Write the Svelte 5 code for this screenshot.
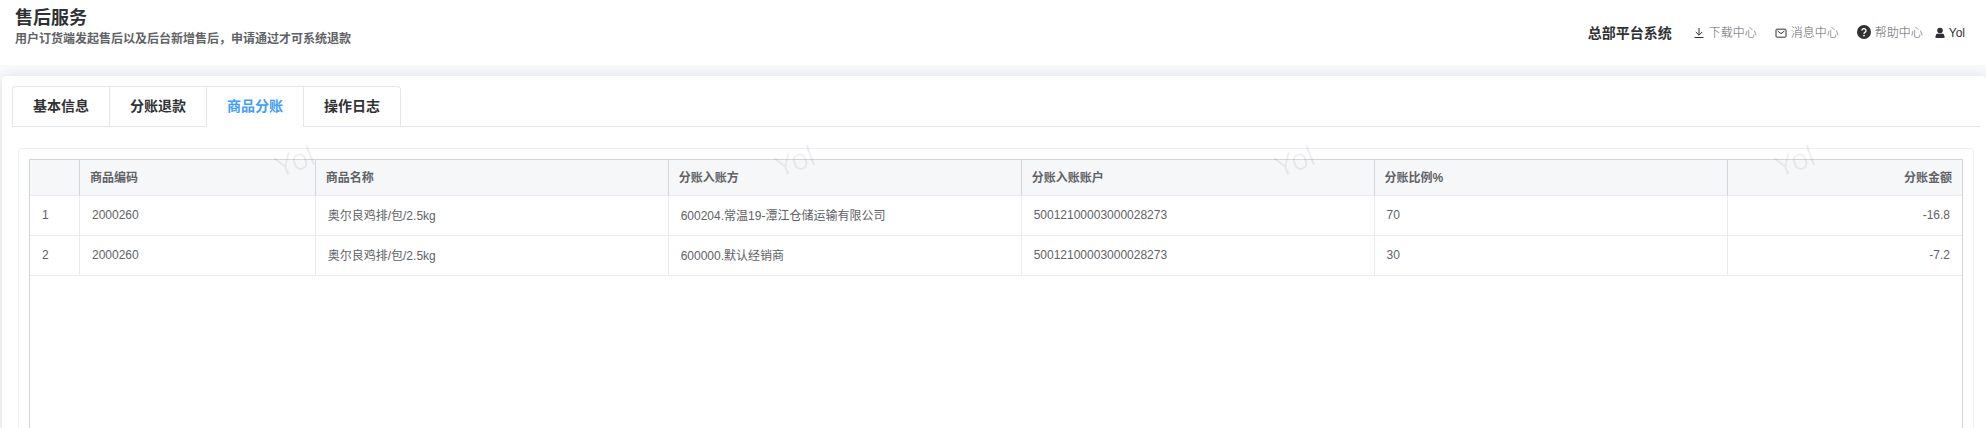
<script lang="ts">
  type Row = {
    code: string;
    name: string;
    payee: string;
    account: string;
    ratio: string;
    amount: string;
  };

  const tabs = ["基本信息", "分账退款", "商品分账", "操作日志"];
  let active = $state(2);

  const rows: Row[] = [
    {
      code: "2000260",
      name: "奥尔良鸡排/包/2.5kg",
      payee: "600204.常温19-潭江仓储运输有限公司",
      account: "50012100003000028273",
      ratio: "70",
      amount: "-16.8",
    },
    {
      code: "2000260",
      name: "奥尔良鸡排/包/2.5kg",
      payee: "600000.默认经销商",
      account: "50012100003000028273",
      ratio: "30",
      amount: "-7.2",
    },
  ];

  const marks = [0, 1, 2, 3];
</script>

<div class="page">
  <header>
    <div class="heading">
      <h1>售后服务</h1>
      <p>用户订货端发起售后以及后台新增售后，申请通过才可系统退款</p>
    </div>
    <nav>
      <strong>总部平台系统</strong>
      <a class="link" href="#download">
        <svg width="12" height="12" viewBox="0 0 12 12" fill="none" stroke="#303133">
          <path d="M6 1v7M2.8 5 6 8.2 9.2 5M1.5 10.5h9" />
        </svg>
        下载中心
      </a>
      <a class="link" href="#message">
        <svg width="12" height="12" viewBox="0 0 12 12" fill="none" stroke="#303133">
          <rect x="1" y="2.2" width="10" height="8" rx="0.8" />
          <path d="M2.6 4 6 6.6 9.4 4" />
        </svg>
        消息中心
      </a>
      <a class="link" href="#help">
        <svg class="raised" width="14" height="14" viewBox="0 0 14 14">
          <circle cx="7" cy="7" r="7" fill="#303133" />
          <path
            d="M5 5.6a2 2 0 1 1 3.2 1.6C7.4 7.7 7 8 7 8.8"
            fill="none"
            stroke="#fff"
            stroke-width="1.4"
          />
          <circle cx="7" cy="10.6" r="0.9" fill="#fff" />
        </svg>
        帮助中心
      </a>
      <a class="user" href="#user">
        <svg width="10" height="12" viewBox="0 0 10 12" fill="#303133">
          <circle cx="5" cy="3.6" r="2.8" />
          <path d="M0.5 11V9.2Q0.5 6.6 3 6.4 5 7.6 7 6.4 9.5 6.6 9.5 9.2V11Z" />
        </svg>
        Yol
      </a>
    </nav>
  </header>

  <main>
    <div class="tab-bar">
      <div class="tabs" role="tablist">
        {#each tabs as tab, i}
          <button
            type="button"
            role="tab"
            aria-selected={i === active}
            class:active={i === active}
            onclick={() => (active = i)}>{tab}</button
          >
        {/each}
      </div>
    </div>

    <section class="panel">
      <div class="grid">
        <table>
          <colgroup>
            <col class="c-index" />
            <col class="c-code" />
            <col class="c-wide" />
            <col class="c-wide" />
            <col class="c-wide" />
            <col class="c-wide" />
            <col />
          </colgroup>
          <thead>
            <tr>
              <th></th>
              <th>商品编码</th>
              <th>商品名称</th>
              <th>分账入账方</th>
              <th>分账入账账户</th>
              <th>分账比例%</th>
              <th class="num">分账金额</th>
            </tr>
          </thead>
          <tbody>
            {#each rows as row, i}
              <tr>
                <td>{i + 1}</td>
                <td>{row.code}</td>
                <td>{row.name}</td>
                <td>{row.payee}</td>
                <td>{row.account}</td>
                <td>{row.ratio}</td>
                <td class="num">{row.amount}</td>
              </tr>
            {/each}
          </tbody>
        </table>
      </div>
    </section>
  </main>

  <div class="watermark" aria-hidden="true">
    {#each marks as mark (mark)}
      <span>Yol</span>
    {/each}
  </div>
</div>

<style>
  :global(body) {
    background: #f8f9fb;
  }

  .page {
    position: relative;
    display: flex;
    flex-direction: column;
    height: 100vh;
    overflow: hidden;
    font-family: "Liberation Sans", "Noto Sans CJK SC", sans-serif;
    font-size: 12px;
    color: #606266;
  }

  header {
    display: flex;
    justify-content: space-between;
    align-items: center;
    flex: none;
    box-sizing: border-box;
    height: 65px;
    padding: 0 21px 0 15px;
    background: #fff;
  }

  .heading {
    padding-bottom: 12px;
  }

  h1 {
    margin: 0;
    font-size: 18px;
    line-height: 24px;
    font-weight: 700;
    color: #303133;
  }

  p {
    margin: 0;
    line-height: 18px;
    font-weight: 700;
  }

  nav {
    display: flex;
    align-items: center;
    gap: 18px;
    line-height: 18px;
  }

  strong {
    margin-right: 3px;
    font-size: 14px;
    color: #303133;
  }

  nav a {
    display: flex;
    align-items: center;
    gap: 4px;
    text-decoration: none;
  }

  .link {
    font-weight: 300;
    color: #606266;
  }

  .raised {
    margin-bottom: 2px;
  }

  .user {
    margin-left: -6px;
    color: #303133;
  }

  main {
    flex: 1 0 auto;
    margin: 11px 0 0 2px;
    background: #fff;
    border-radius: 4px;
    box-shadow: 0 0 12px rgba(40, 40, 90, 0.12);
  }

  .tab-bar {
    display: flex;
    margin: 10px 6px 0 10px;
    border-bottom: 1px solid #e4e7ed;
  }

  .tabs {
    display: flex;
    margin-bottom: -1px;
    border: 1px solid #e4e7ed;
    border-bottom: 0;
    border-radius: 4px 4px 0 0;
  }

  .tabs button {
    box-sizing: border-box;
    height: 40px;
    padding: 0 20px 3px;
    border: 0;
    border-bottom: 1px solid #e4e7ed;
    background: none;
    font-family: inherit;
    font-size: 14px;
    font-weight: 700;
    color: #303133;
    cursor: pointer;
  }

  .tabs button + button {
    border-left: 1px solid #e4e7ed;
  }

  .tabs button.active {
    border-bottom-color: #fff;
    color: #409eff;
  }

  .panel {
    margin: 21px 12px 0 16px;
    padding: 10px;
    border: 1px solid #ebeef5;
    border-radius: 4px;
  }

  .grid {
    min-height: 400px;
    border: 1px solid #d4d5d8;
  }

  table {
    width: 100%;
    table-layout: fixed;
    border-spacing: 0;
  }

  .c-index {
    width: 50px;
  }

  .c-code {
    width: 12.2%;
  }

  .c-wide {
    width: 18.27%;
  }

  th,
  td {
    box-sizing: border-box;
    border-right: 1px solid #ebecf3;
    border-bottom: 1px solid #ebecf3;
    text-align: left;
    white-space: nowrap;
  }

  th {
    height: 36px;
    padding: 0 10px 3px;
    border-right-color: #d4d5d8;
    background: #f6f7f9;
    font-weight: 700;
  }

  td {
    height: 40px;
    padding: 0 12px 2px;
  }

  th:last-child,
  td:last-child {
    border-right: 0;
  }

  .num {
    text-align: right;
  }

  .watermark {
    position: absolute;
    top: 144px;
    left: 274px;
    display: flex;
    pointer-events: none;
  }

  .watermark span {
    flex: none;
    width: 44px;
    margin-right: 456px;
    font-size: 30px;
    line-height: 34px;
    color: rgba(0, 0, 0, 0.06);
    transform: rotate(-20deg);
  }
</style>
